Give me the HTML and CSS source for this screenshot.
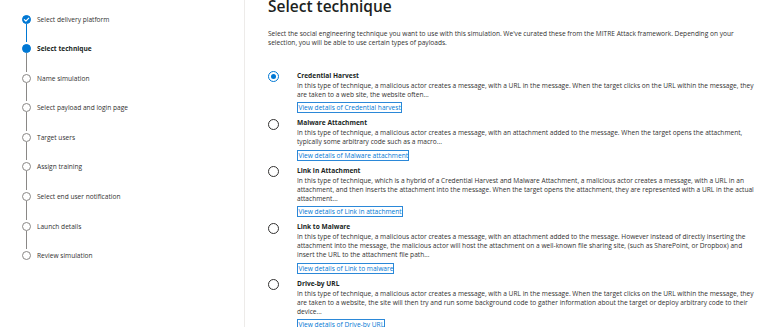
FILE: index.html
```html
<!DOCTYPE html>
<html lang="en">
<head>
    <meta charset="UTF-8">
    <meta name="viewport" content="width=device-width, initial-scale=1.0">
    <title>Select technique</title>
    <link rel="stylesheet" href="styles.css">
</head>
<body>
    <div class="wizard">
        <nav class="steps">
            <div class="step done">
                <div class="marker">
                    <span class="dot">
                        <svg viewBox="0 0 10 10" width="9" height="9"><path d="M2.6 5.1 L4.3 6.8 L7.5 3.4" fill="none" stroke="#fff" stroke-width="1.3" stroke-linecap="round" stroke-linejoin="round"/></svg>
                    </span>
                    <span class="line"></span>
                </div>
                <span class="label">Select delivery platform</span>
            </div>
            <div class="step current">
                <div class="marker"><span class="dot"></span><span class="line"></span></div>
                <span class="label">Select technique</span>
            </div>
            <div class="step">
                <div class="marker"><span class="dot"></span><span class="line"></span></div>
                <span class="label">Name simulation</span>
            </div>
            <div class="step">
                <div class="marker"><span class="dot"></span><span class="line"></span></div>
                <span class="label">Select payload and login page</span>
            </div>
            <div class="step">
                <div class="marker"><span class="dot"></span><span class="line"></span></div>
                <span class="label">Target users</span>
            </div>
            <div class="step">
                <div class="marker"><span class="dot"></span><span class="line"></span></div>
                <span class="label">Assign training</span>
            </div>
            <div class="step">
                <div class="marker"><span class="dot"></span><span class="line"></span></div>
                <span class="label">Select end user notification</span>
            </div>
            <div class="step">
                <div class="marker"><span class="dot"></span><span class="line"></span></div>
                <span class="label">Launch details</span>
            </div>
            <div class="step last">
                <div class="marker"><span class="dot"></span></div>
                <span class="label">Review simulation</span>
            </div>
        </nav>

        <main class="content">
            <h1>Select technique</h1>
            <p class="intro">Select the social engineering technique you want to use with this simulation. We've curated these from the MITRE Attack framework. Depending on your selection, you will be able to use certain types of payloads.</p>

            <div class="options">
                <div class="option selected">
                    <span class="radio"></span>
                    <div class="option-body">
                        <div class="option-title">Credential Harvest</div>
                        <p class="option-desc">In this type of technique, a malicious actor creates a message, with a URL in the message. When the target clicks on the URL within the message, they are taken to a web site, the website often...</p>
                        <a href="#" class="details">View details of Credential harvest</a>
                    </div>
                </div>
                <div class="option">
                    <span class="radio"></span>
                    <div class="option-body">
                        <div class="option-title">Malware Attachment</div>
                        <p class="option-desc">In this type of technique, a malicious actor creates a message, with an attachment added to the message. When the target opens the attachment, typically some arbitrary code such as a macro...</p>
                        <a href="#" class="details">View details of Malware attachment</a>
                    </div>
                </div>
                <div class="option">
                    <span class="radio"></span>
                    <div class="option-body">
                        <div class="option-title">Link in Attachment</div>
                        <p class="option-desc">In this type of technique, which is a hybrid of a Credential Harvest and Malware Attachment, a malicious actor creates a message, with a URL in an attachment, and then inserts the attachment into the message. When the target opens the attachment, they are represented with a URL in the actual attachment...</p>
                        <a href="#" class="details">View details of Link in attachment</a>
                    </div>
                </div>
                <div class="option">
                    <span class="radio"></span>
                    <div class="option-body">
                        <div class="option-title">Link to Malware</div>
                        <p class="option-desc">In this type of technique, a malicious actor creates a message, with an attachment added to the message. However instead of directly inserting the attachment into the message, the malicious actor will host the attachment on a well-known file sharing site, (such as SharePoint, or Dropbox) and insert the URL to the attachment file path...</p>
                        <a href="#" class="details">View details of Link to malware</a>
                    </div>
                </div>
                <div class="option">
                    <span class="radio"></span>
                    <div class="option-body">
                        <div class="option-title">Drive-by URL</div>
                        <p class="option-desc">In this type of technique, a malicious actor creates a message, with a URL in the message. When the target clicks on the URL within the message, they are taken to a website, the site will then try and run some background code to gather information about the target or deploy arbitrary code to their device...</p>
                        <a href="#" class="details">View details of Drive-by URL</a>
                    </div>
                </div>
            </div>
        </main>
    </div>
</body>
</html>
```

FILE: styles.css
```css
body {
    margin: 0;
    font-family: 'Segoe UI', 'Open Sans', sans-serif;
    font-size: 6.6px;
    background-color: #ffffff;
    color: #323130;
    overflow: hidden;
}

.wizard {
    display: flex;
    height: 100vh;
}

/* left step list */
.steps {
    width: 245px;
    flex-shrink: 0;
    border-right: 1px solid #edebe9;
    padding: 14.5px 0 0 22px;
    box-sizing: border-box;
}

.step {
    display: flex;
    gap: 6px;
    height: 29.6px;
}

.marker {
    display: flex;
    flex-direction: column;
    align-items: center;
    width: 9px;
}

.dot {
    width: 9px;
    height: 9px;
    box-sizing: border-box;
    border-radius: 50%;
    border: 1px solid #8a8886;
    display: flex;
    flex-shrink: 0;
}

.line {
    flex: 1;
    width: 1px;
    background-color: #8a8886;
    margin-bottom: 2px;
}

.step.done .dot,
.step.current .dot {
    background-color: #0078d4;
    border-color: #0078d4;
}

.step.done .dot svg {
    margin: -1px;
}

.step.done .line {
    background-color: #0078d4;
}

.label {
    font-size: 6.6px;
    line-height: 9px;
    color: #323130;
}

.step.current .label {
    font-weight: 700;
    color: #201f1e;
}

/* main content */
.content {
    flex: 1;
    padding: 0 10px 0 23px;
}

h1 {
    font-size: 15.5px;
    font-weight: 600;
    line-height: 13px;
    margin: 0;
    color: #201f1e;
}

.intro {
    line-height: 9.5px;
    margin: 15.5px 0 0;
}

.options {
    display: flex;
    flex-direction: column;
    gap: 5px;
    margin-top: 23px;
}

.option {
    display: grid;
    grid-template-columns: 11px 1fr;
    column-gap: 18px;
}

.radio {
    width: 11px;
    height: 11px;
    box-sizing: border-box;
    border: 1px solid #323130;
    border-radius: 50%;
    margin-top: 0.5px;
    display: flex;
    align-items: center;
    justify-content: center;
}

.option.selected .radio {
    border-color: #0078d4;
}

.option.selected .radio::after {
    content: '';
    width: 5px;
    height: 5px;
    border-radius: 50%;
    background-color: #0078d4;
}

.option-title {
    font-weight: 700;
    line-height: 10px;
    color: #201f1e;
}

.option-desc {
    line-height: 9px;
    margin: 0;
}

.details {
    display: block;
    width: fit-content;
    margin-top: 3.5px;
    line-height: 9px;
    color: #0078d4;
    text-decoration: none;
    border: 1.5px solid #2b88d8;
    padding: 0 0 0 0.5px;
}
```
